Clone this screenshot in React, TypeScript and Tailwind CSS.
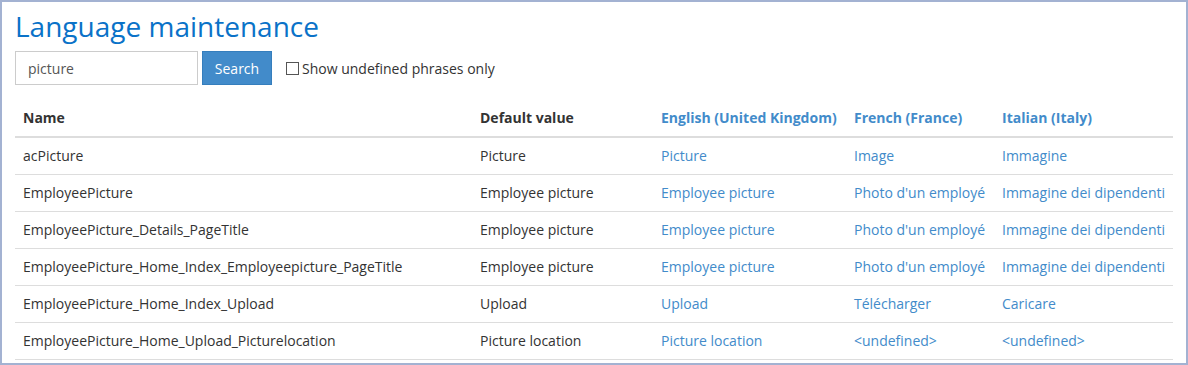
import React from "react";

const rows = [
  ["acPicture", "Picture", "Picture", "Image", "Immagine"],
  ["EmployeePicture", "Employee picture", "Employee picture", "Photo d'un employé", "Immagine dei dipendenti"],
  ["EmployeePicture_Details_PageTitle", "Employee picture", "Employee picture", "Photo d'un employé", "Immagine dei dipendenti"],
  ["EmployeePicture_Home_Index_Employeepicture_PageTitle", "Employee picture", "Employee picture", "Photo d'un employé", "Immagine dei dipendenti"],
  ["EmployeePicture_Home_Index_Upload", "Upload", "Upload", "Télécharger", "Caricare"],
  ["EmployeePicture_Home_Upload_Picturelocation", "Picture location", "Picture location", "<undefined>", "<undefined>"],
];

export default function App() {
  return (
    <div
      className="w-[1188px] h-[365px] border-2 border-[#a3b2d2] bg-white overflow-hidden text-[14px] text-[#333333]"
      style={{ fontFamily: '"Open Sans", "Liberation Sans", sans-serif' }}
    >
      <div className="pl-[13px] pr-[13px]">
        <h1 className="text-[28px] leading-[39px] text-[#0a72c8] mt-[5px] font-normal">Language maintenance</h1>
        <div className="flex items-center mt-[5px] h-[34px]">
          <div className="w-[183px] h-[34px] border border-[#cccccc] flex items-center pl-[12px] text-[#555555]">picture</div>
          <div className="ml-[4px] w-[70px] h-[34px] bg-[#428bca] border border-[#357ebd] text-white flex items-center justify-center">Search</div>
          <div className="ml-[14px] flex items-center">
            <span className="w-[13px] h-[13px] border border-[#555] bg-white inline-block mt-[1px]" />
            <span className="ml-[3px]">Show undefined phrases only</span>
          </div>
        </div>
        <table className="mt-[15px] w-[1158px] border-collapse table-fixed">
          <colgroup>
            <col className="w-[457px]" />
            <col className="w-[181px]" />
            <col className="w-[193px]" />
            <col className="w-[148px]" />
            <col className="w-[179px]" />
          </colgroup>
          <thead>
            <tr className="border-b-2 border-[#dddddd]">
              <th className="text-left font-bold px-[8px] py-[8px] leading-[20px]">Name</th>
              <th className="text-left font-bold px-[8px] py-[8px] leading-[20px]">Default value</th>
              <th className="text-left font-bold px-[8px] py-[8px] leading-[20px] text-[#428bca] whitespace-nowrap">English (United Kingdom)</th>
              <th className="text-left font-bold px-[8px] py-[8px] leading-[20px] text-[#428bca] whitespace-nowrap">French (France)</th>
              <th className="text-left font-bold px-[8px] py-[8px] leading-[20px] text-[#428bca] whitespace-nowrap">Italian (Italy)</th>
            </tr>
          </thead>
          <tbody>
            {rows.map((r, i) => (
              <tr key={i} className="border-b border-[#dddddd]">
                <td className="px-[8px] py-[8px] leading-[20px] whitespace-nowrap">{r[0]}</td>
                <td className="px-[8px] py-[8px] leading-[20px] whitespace-nowrap">{r[1]}</td>
                <td className="px-[8px] py-[8px] leading-[20px] whitespace-nowrap text-[#428bca]">{r[2]}</td>
                <td className="px-[8px] py-[8px] leading-[20px] whitespace-nowrap text-[#428bca] overflow-hidden">{r[3]}</td>
                <td className="px-[8px] py-[8px] leading-[20px] whitespace-nowrap text-[#428bca] overflow-hidden">{r[4]}</td>
              </tr>
            ))}
          </tbody>
        </table>
      </div>
    </div>
  );
}
